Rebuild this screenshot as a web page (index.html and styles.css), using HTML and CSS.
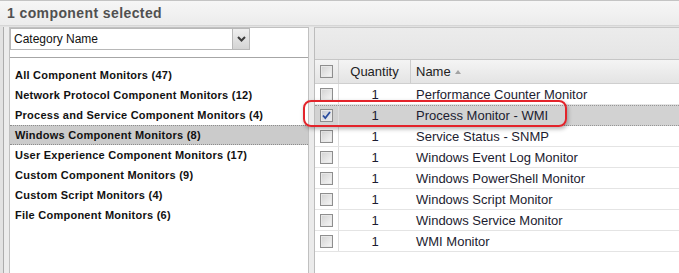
FILE: index.html
```html
<!DOCTYPE html>
<html>
<head>
<meta charset="utf-8">
<link rel="stylesheet" href="styles.css">
</head>
<body>
<div class="app">
  <div class="title">1 component selected</div>
  <div class="main">
    <div class="frame">
      <div class="left">
        <div class="select">
          <span class="select-text">Category Name</span>
          <span class="select-btn"><svg width="9" height="6" viewBox="0 0 9 6"><polyline points="1,1 4.5,4.5 8,1" fill="none" stroke="#3c3c3c" stroke-width="2"/></svg></span>
        </div>
        <div class="sep"></div>
        <div class="list">
          <div class="item">All Component Monitors (47)</div>
          <div class="item">Network Protocol Component Monitors (12)</div>
          <div class="item">Process and Service Component Monitors (4)</div>
          <div class="item sel">Windows Component Monitors (8)</div>
          <div class="item">User Experience Component Monitors (17)</div>
          <div class="item">Custom Component Monitors (9)</div>
          <div class="item">Custom Script Monitors (4)</div>
          <div class="item">File Component Monitors (6)</div>
        </div>
      </div>
      <div class="splitter"></div>
      <div class="right">
        <div class="toolbar"></div>
        <div class="grid">
          <div class="row head">
            <div class="c-check"><span class="cb"></span></div>
            <div class="c-qty">Quantity</div>
            <div class="c-name">Name<span class="sort"></span></div>
          </div>
          <div class="row">
            <div class="c-check"><span class="cb"></span></div>
            <div class="c-qty">1</div>
            <div class="c-name">Performance Counter Monitor</div>
          </div>
          <div class="row sel">
            <div class="c-check"><span class="cb checked"><svg width="11" height="11" viewBox="0 0 11 11"><path d="M2 5.5 L4.3 8 L9 2" fill="none" stroke="#2a4d9e" stroke-width="1.8"/></svg></span></div>
            <div class="c-qty">1</div>
            <div class="c-name">Process Monitor - WMI</div>
          </div>
          <div class="row">
            <div class="c-check"><span class="cb"></span></div>
            <div class="c-qty">1</div>
            <div class="c-name">Service Status - SNMP</div>
          </div>
          <div class="row">
            <div class="c-check"><span class="cb"></span></div>
            <div class="c-qty">1</div>
            <div class="c-name">Windows Event Log Monitor</div>
          </div>
          <div class="row">
            <div class="c-check"><span class="cb"></span></div>
            <div class="c-qty">1</div>
            <div class="c-name">Windows PowerShell Monitor</div>
          </div>
          <div class="row">
            <div class="c-check"><span class="cb"></span></div>
            <div class="c-qty">1</div>
            <div class="c-name">Windows Script Monitor</div>
          </div>
          <div class="row">
            <div class="c-check"><span class="cb"></span></div>
            <div class="c-qty">1</div>
            <div class="c-name">Windows Service Monitor</div>
          </div>
          <div class="row">
            <div class="c-check"><span class="cb"></span></div>
            <div class="c-qty">1</div>
            <div class="c-name">WMI Monitor</div>
          </div>
        </div>
      </div>
    </div>
  </div>
  <div class="callout"></div>
</div>
</body>
</html>
```

FILE: styles.css
```css
* { box-sizing: border-box; }

body {
  margin: 0;
  background: #efefef;
  font-family: "Liberation Sans", Arial, sans-serif;
}

.app {
  position: relative;
  width: 679px;
  height: 273px;
  overflow: hidden;
  background: #efefef;
}

.title {
  height: 26px;
  line-height: 24px;
  padding-left: 7px;
  border-top: 1px solid #c4c4c4;
  border-bottom: 1px solid #d6d6d6;
  background: linear-gradient(#f6f6f6, #ececec);
  font-size: 14px;
  font-weight: bold;
  letter-spacing: 0.4px;
  color: #505050;
}

.main {
  height: 247px;
  padding-top: 1px;
  padding-left: 3px;
  background: #e2e2e2;
}

.frame {
  display: flex;
  height: 100%;
  border-left: 1px solid #acacac;
  padding-left: 5px;
  background: #ececec;
}

.left {
  width: 300px;
  flex: none;
  background: #fff;
  border: 1px solid #c0c0c0;
  border-bottom: none;
}

.select {
  display: flex;
  width: 240px;
  height: 22px;
  border: 1px solid #b8b8b8;
  background: #fff;
}

.select-text {
  flex: 1;
  padding-left: 3px;
  font-size: 12px;
  line-height: 20px;
  color: #111;
}

.select-btn {
  width: 17px;
  border-left: 1px solid #b8b8b8;
  background: linear-gradient(#efefef, #d4d4d4);
  display: flex;
  align-items: center;
  justify-content: center;
  padding-left: 1px;
}

.sep {
  margin-top: 7px;
  border-top: 1px solid #a6a6a6;
}

.list {
  padding-top: 7px;
}

.item {
  height: 20px;
  line-height: 20px;
  padding-left: 5px;
  font-size: 11px;
  font-weight: bold;
  letter-spacing: 0.25px;
  color: #111;
  white-space: nowrap;
}

.item.sel {
  background: #cbcbcb;
  border-top: 1px dotted #8c8c8c;
  border-bottom: 1px dotted #8c8c8c;
  line-height: 18px;
}

.splitter {
  width: 5px;
  flex: none;
  background: #ebebeb;
}

.right {
  flex: 1;
  background: #fff;
  border-left: 1px solid #bcbcbc;
  border-top: 1px solid #c8c8c8;
}

.toolbar {
  height: 32px;
  border-bottom: 1px solid #c6c6c6;
  background: linear-gradient(#ececec, #e5e5e5);
}

.row {
  display: flex;
  align-items: center;
  height: 21px;
  border-bottom: 1px solid #e4e4e4;
  font-size: 13px;
  color: #1c1c30;
}

.row.head {
  height: 24px;
  border-bottom: 1px solid #cfcfcf;
  background: linear-gradient(#f4f4f4, #e4e4e4);
  color: #222;
}

.row.sel {
  background: #d2d2d2;
  border-top: 1px dotted #969696;
  border-bottom: 1px dotted #969696;
}

.c-check {
  width: 24px;
  height: 100%;
  flex: none;
  display: flex;
  align-items: center;
  padding-left: 5px;
  border-right: 1px solid #dedede;
}

.head .c-check {
  border-right: 1px solid #d2d2d2;
}

.c-qty {
  width: 72px;
  height: 100%;
  flex: none;
  display: flex;
  align-items: center;
  justify-content: center;
}

.head .c-qty {
  border-right: 1px solid #cdcdcd;
}

.c-name {
  flex: 1;
  display: flex;
  align-items: center;
  padding-left: 5px;
  white-space: nowrap;
}

.sort {
  margin-left: 4px;
  width: 0;
  height: 0;
  border-left: 3.5px solid transparent;
  border-right: 3.5px solid transparent;
  border-bottom: 4px solid #a3a3a3;
}

.cb {
  display: flex;
  align-items: center;
  justify-content: center;
  width: 13px;
  height: 13px;
  border: 1px solid #8e8e8e;
  background: linear-gradient(135deg, #d2d2d2, #f7f7f7);
  box-shadow: inset 0 0 0 1px #e8e8e8;
}

.cb.checked {
  background: linear-gradient(135deg, #c4c8d0, #eef0f4);
}

.callout {
  position: absolute;
  left: 303px;
  top: 100px;
  width: 264px;
  height: 27px;
  border: 2px solid #e3242b;
  border-radius: 8px;
  box-shadow: 1px 2px 4px rgba(0, 0, 0, 0.3);
}
```
